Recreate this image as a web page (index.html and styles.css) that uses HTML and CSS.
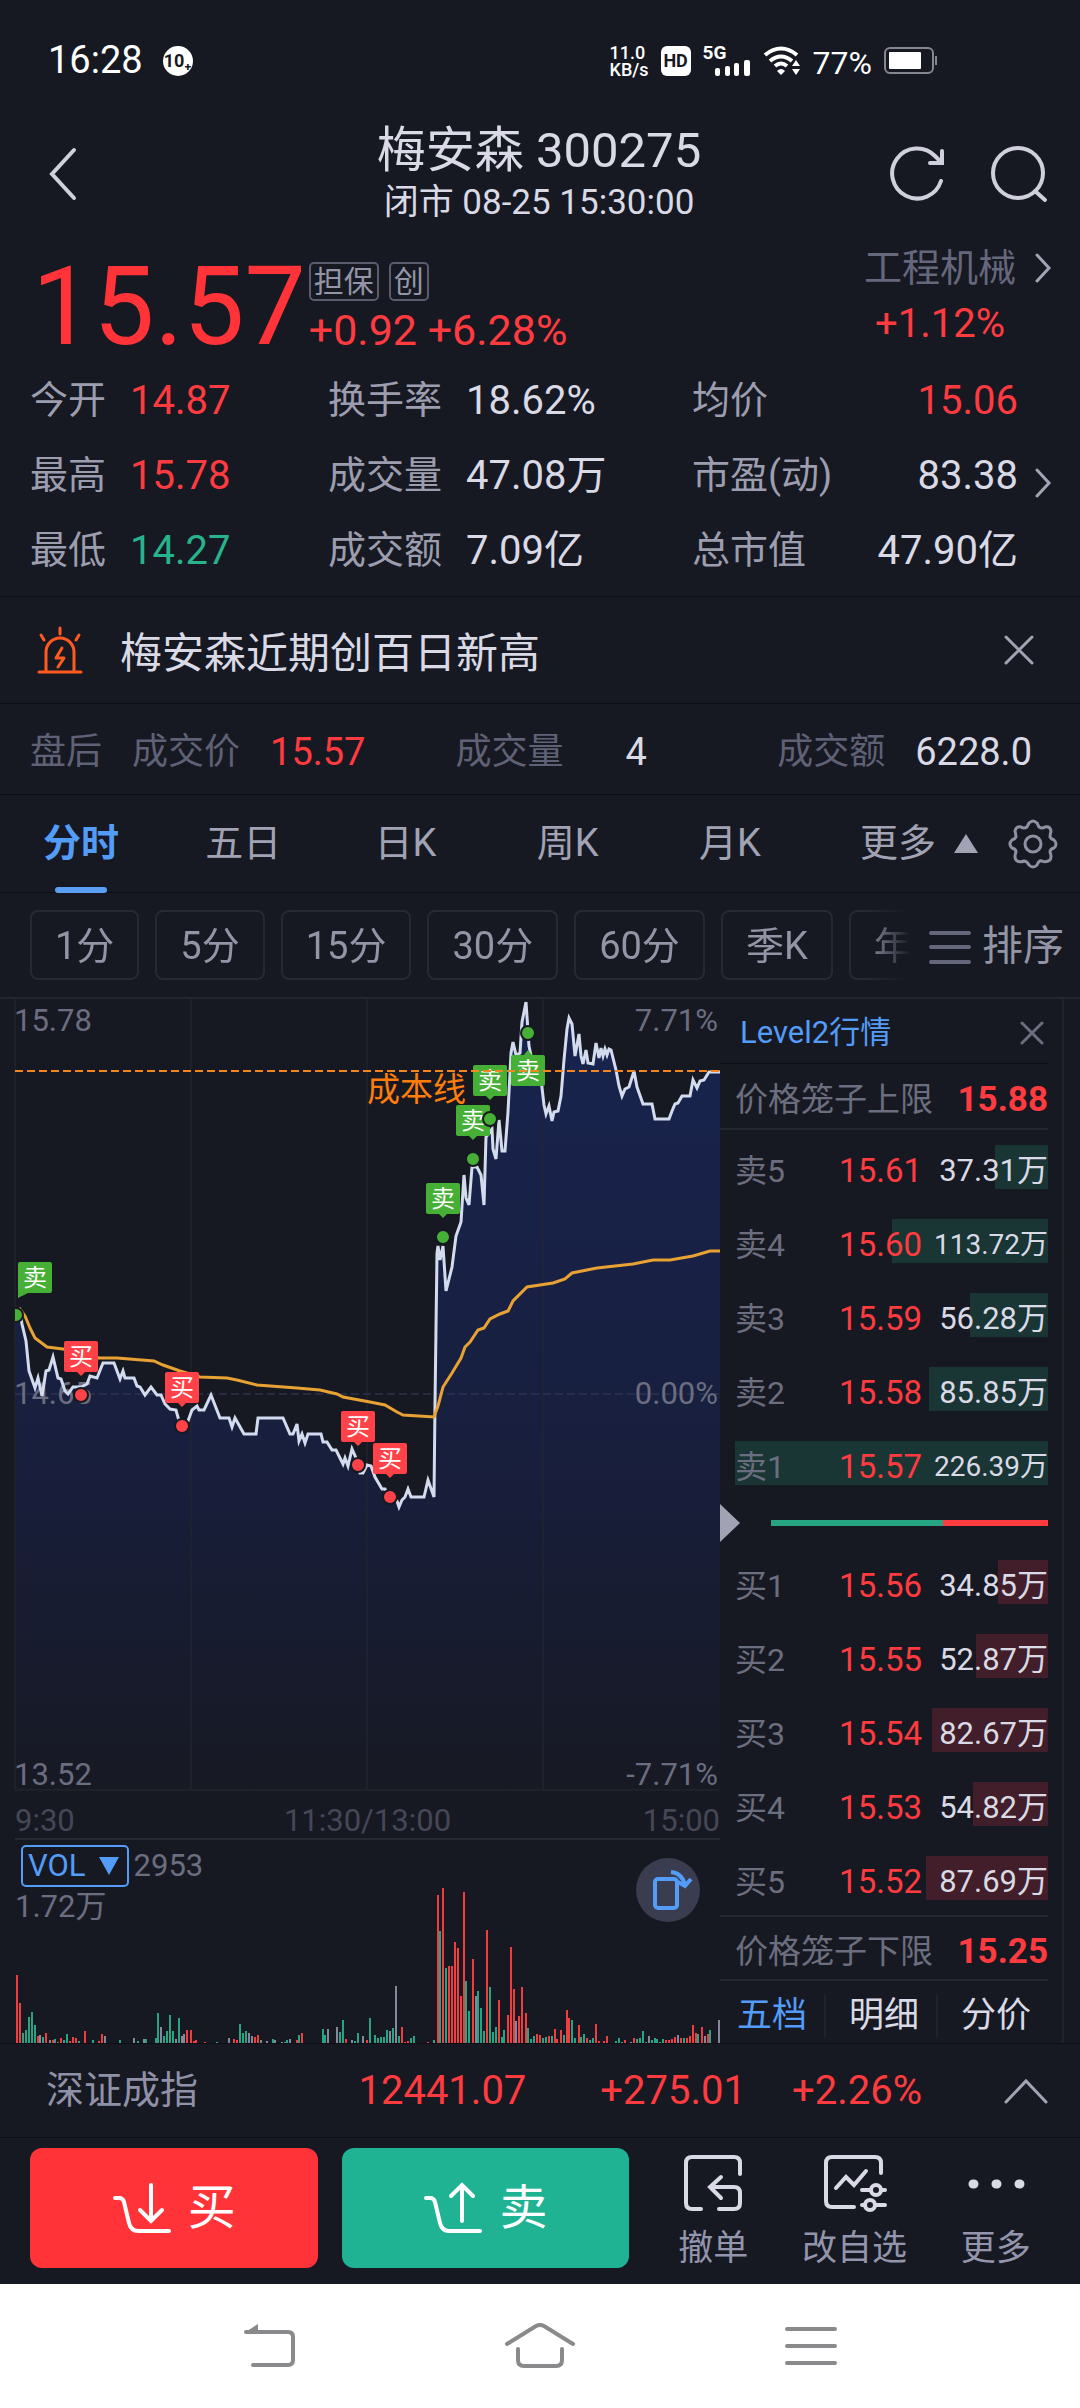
FILE: index.html
```html
<!DOCTYPE html>
<html lang="zh-CN">

<head>
    <meta charset="UTF-8">
    <meta name="viewport" content="width=device-width, initial-scale=1.0">
    <title>梅安森 300275</title>
    <link rel="stylesheet" href="styles.css">
</head>

<body>
    <div class="status-bar">
        <span class="clock">16:28</span>
        <span class="badge">10₊</span>
        <div class="status-right">
            <div class="net-speed"><span>11.0</span><span>KB/s</span></div>
            <span class="hd">HD</span>
            <div class="signal">
                <span>5G</span>
                <svg width="36" height="16" viewBox="0 0 36 16" fill="#fff">
                    <rect x="0" y="8" width="5" height="8" rx="2" />
                    <rect x="10" y="6" width="5" height="10" rx="2" />
                    <rect x="19" y="3" width="5" height="13" rx="2" />
                    <rect x="29" y="0" width="6" height="16" rx="2" />
                </svg>
            </div>
            <svg class="wifi" viewBox="0 0 38 30">
                <g fill="none" stroke="#fff" stroke-width="4">
                    <path d="M2 9Q18 -4 34 9" />
                    <path d="M7 15Q18 6 29 15" />
                    <path d="M12 20Q18 15 24 20" />
                </g>
                <path d="M14 25Q18 21 22 25L18 29z M29 20l4-6 4 6z M29 23l4 6 4-6z" fill="#fff" />
            </svg>
            <span class="percent">77%</span>
            <svg class="battery" viewBox="0 0 54 28">
                <rect x="1" y="1" width="48" height="25" rx="5" fill="none" stroke="#85868f" stroke-width="2" />
                <rect x="5" y="5" width="32" height="17" rx="1" fill="#fff" />
                <rect x="51" y="9" width="2" height="9" fill="#85868f" />
            </svg>
        </div>
    </div>

    <header class="top">
        <button class="icon-btn back" aria-label="返回">
            <svg width="30" height="54" viewBox="0 0 30 54"><path d="M26 3L4 27l22 24" /></svg>
        </button>
        <div class="title">
            <h1>梅安森 300275</h1>
            <p>闭市 08-25 15:30:00</p>
        </div>
        <div class="top-icons">
            <button class="icon-btn" aria-label="刷新">
                <svg width="58" height="58" viewBox="0 0 58 58"><path d="M53 36A25 25 0 1 1 47 11L53 17M54 6V18H42" /></svg>
            </button>
            <button class="icon-btn" aria-label="搜索">
                <svg width="58" height="58" viewBox="0 0 58 58"><circle cx="28" cy="28" r="25" /><path d="M45 46l10 9" /></svg>
            </button>
        </div>
    </header>

    <section class="quote">
        <div class="price">15.57</div>
        <div class="change">
            <div class="tags"><span>担保</span><span>创</span></div>
            <div class="red">+0.92 +6.28%</div>
        </div>
        <a class="sector" href="#">
            <span class="sector-name">工程机械</span>
            <svg width="18" height="30" viewBox="0 0 18 30"><path d="M3 2l12 13L3 28" /></svg>
            <span class="sector-change">+1.12%</span>
        </a>
    </section>

    <section class="stats">
        <dl>
            <div><dt>今开</dt><dd class="red">14.87</dd></div>
            <div><dt>换手率</dt><dd>18.62%</dd></div>
            <div class="end"><dt>均价</dt><dd class="red">15.06</dd></div>
            <div><dt>最高</dt><dd class="red">15.78</dd></div>
            <div><dt>成交量</dt><dd>47.08万</dd></div>
            <div class="end"><dt>市盈(动)</dt><dd>83.38</dd></div>
            <div><dt>最低</dt><dd class="green">14.27</dd></div>
            <div><dt>成交额</dt><dd>7.09亿</dd></div>
            <div class="end"><dt>总市值</dt><dd>47.90亿</dd></div>
        </dl>
        <button class="icon-btn more-stats" aria-label="展开指标">
            <svg width="18" height="30" viewBox="0 0 18 30"><path d="M3 2l12 13L3 28" /></svg>
        </button>
    </section>

    <section class="alert">
        <svg class="siren" width="46" height="48" viewBox="0 0 46 48" fill="none" stroke="#ff5a1f" stroke-width="3" stroke-linecap="round">
            <path d="M2 46h42M9 45V26a14 14 0 0 1 28 0V45M23 2v6M4 9l3 5M42 9l-3 5" />
            <path d="M25 22l-6 10h8l-6 9" stroke-linejoin="round" />
        </svg>
        <p>梅安森近期创百日新高</p>
        <button class="icon-btn" aria-label="关闭提示">
            <svg width="30" height="30" viewBox="0 0 30 30"><path d="M2 2l26 26M28 2L2 28" /></svg>
        </button>
    </section>

    <section class="after-hours">
        <span>盘后</span>
        <span>成交价</span><b class="red">15.57</b>
        <span class="vol-label">成交量</span><b>4</b>
        <span class="amount-label">成交额</span><b>6228.0</b>
    </section>

    <nav class="tabs">
        <button class="active">分时</button>
        <button>五日</button>
        <button>日K</button>
        <button>周K</button>
        <button>月K</button>
        <button class="more">更多<i></i></button>
        <button class="gear" aria-label="设置">
            <svg width="50" height="50" viewBox="0 0 50 50">
                <path d="M21 4Q25 0 29 4L31 8Q34 10 37 8Q42 7 43 12Q42 16 42 18Q43 20 46 21Q50 25 46 29Q42 30 42 33Q44 38 42 41Q38 44 34 42Q31 41 29 46Q25 50 21 46Q19 42 16 42Q11 44 8 41Q6 38 8 33Q8 30 4 29Q0 25 4 21Q7 20 8 18Q8 16 7 12Q8 7 13 8Q16 10 19 8Z" />
                <circle cx="25" cy="25" r="8" />
            </svg>
        </button>
    </nav>

    <div class="periods">
        <div class="chips">
            <button>1分</button>
            <button>5分</button>
            <button>15分</button>
            <button>30分</button>
            <button>60分</button>
            <button>季K</button>
            <button>年</button>
        </div>
        <button class="sort">
            <svg width="42" height="36" viewBox="0 0 42 36"><path d="M2 4h38M2 18h38M2 33h38" /></svg>
            排序
        </button>
    </div>

    <main>
        <div class="charts">
            <svg class="price-chart" viewBox="0 0 720 793">
                <defs>
                    <linearGradient id="area" x1="0" y1="0" x2="0" y2="1">
                        <stop offset="0" stop-color="#18244f" />
                        <stop offset="0.55" stop-color="#181f3e" />
                        <stop offset="1" stop-color="#171923" />
                    </linearGradient>
                    <clipPath id="plot"><rect x="15" y="0" width="705" height="793" /></clipPath>
                </defs>
                <polygon id="fill" fill="url(#area)" />
                <path class="grid" d="M15 0V791M191 0V791M367 0V791M543 0V791M15 791H720" />
                <path class="zero" d="M15 395H720" />
                <g class="scale">
                    <text x="14" y="32">15.78</text>
                    <text x="14" y="405">14.65</text>
                    <text x="14" y="786">13.52</text>
                    <text x="718" y="32" text-anchor="end">7.71%</text>
                    <text x="718" y="405" text-anchor="end">0.00%</text>
                    <text x="718" y="786" text-anchor="end">-7.71%</text>
                </g>
                <polyline id="line" class="line" />
                <polyline class="average" points="19,309 25,317 30,329 35,339 47,348 63,350 99,359 117,359 154,362 163,366 180,372 200,378 227,379 237,381 257,386 297,389 320,391 337,395 343,398 370,403 385,406 397,413 403,416 434,418 438,407 443,388 452,374 461,359 465,348 470,343 478,331 484,329 490,320 500,315 508,312 513,302 527,288 553,284 565,280 572,274 597,269 633,265 653,261 670,261 693,257 710,252 720,252" />
                <text x="367" y="102" class="cost-text">成本线</text>
                <g id="marks" clip-path="url(#plot)"></g>
                <path class="cost" d="M15 72H720" />
            </svg>
            <div class="times"><span>9:30</span><span>11:30/13:00</span><span>15:00</span></div>
            <div class="volume">
                <svg id="bars" viewBox="0 0 720 203"></svg>
                <div class="volume-head">
                    <div><button class="vol-btn">VOL <i></i></button><span>2953</span></div>
                    <span>1.72万</span>
                </div>
                <button class="rotate" aria-label="横屏">
                    <svg width="64" height="64" viewBox="0 0 64 64">
                        <rect x="19" y="21" width="22" height="29" rx="3" />
                        <path d="M35 14Q46 15 49 27M42 24l7 4 6-7" />
                    </svg>
                </button>
            </div>
        </div>

        <aside class="book">
            <div class="book-title">
                <a href="#">Level2行情</a>
                <button class="icon-btn" aria-label="关闭行情">
                    <svg width="24" height="24" viewBox="0 0 24 24"><path d="M2 2l20 20M22 2L2 22" /></svg>
                </button>
            </div>
            <div class="limit"><span>价格笼子上限</span><b>15.88</b></div>
            <table class="asks">
                <tr style="--size: 17%"><th>卖5</th><td>15.61</td><td>37.31万</td></tr>
                <tr style="--size: 50%"><th>卖4</th><td>15.60</td><td class="long">113.72万</td></tr>
                <tr style="--size: 25%"><th>卖3</th><td>15.59</td><td>56.28万</td></tr>
                <tr style="--size: 38%"><th>卖2</th><td>15.58</td><td>85.85万</td></tr>
                <tr style="--size: 100%"><th>卖1</th><td>15.57</td><td class="long">226.39万</td></tr>
            </table>
            <div class="ratio"><i class="arrow"></i><div class="ratio-bar"><i style="width: 62%"></i></div></div>
            <table class="bids">
                <tr style="--size: 16%"><th>买1</th><td>15.56</td><td>34.85万</td></tr>
                <tr style="--size: 23%"><th>买2</th><td>15.55</td><td>52.87万</td></tr>
                <tr style="--size: 37%"><th>买3</th><td>15.54</td><td>82.67万</td></tr>
                <tr style="--size: 24%"><th>买4</th><td>15.53</td><td>54.82万</td></tr>
                <tr style="--size: 39%"><th>买5</th><td>15.52</td><td>87.69万</td></tr>
            </table>
            <div class="limit lower"><span>价格笼子下限</span><b>15.25</b></div>
            <div class="book-tabs">
                <button class="active">五档</button>
                <button>明细</button>
                <button>分价</button>
            </div>
        </aside>
    </main>

    <div class="index-row">
        <span class="index-name">深证成指</span>
        <span>12441.07</span>
        <span>+275.01</span>
        <span>+2.26%</span>
        <button class="icon-btn" aria-label="展开指数">
            <svg width="44" height="26" viewBox="0 0 44 26"><path d="M2 24L22 3l20 21" /></svg>
        </button>
    </div>

    <footer class="actions">
        <button class="trade buy">
            <svg width="60" height="54" viewBox="0 0 60 54"><path d="M3 17h4q4 0 5 4l5 21q2 8 9 8h31M39 4v36M28 29l11 11 11-11" /></svg>
            买
        </button>
        <button class="trade sell">
            <svg width="60" height="54" viewBox="0 0 60 54"><path d="M3 17h4q4 0 5 4l5 21q2 8 9 8h31M39 40V4M28 15L39 4l11 11" /></svg>
            卖
        </button>
        <button class="tool">
            <svg width="62" height="60" viewBox="0 0 62 60"><path d="M58 20V9q0-6-6-6H10q-6 0-6 6v40q0 6 6 6h9M37 55h15q6 0 6-6V39q0-6-6-6H28M39 23L28 33l11 11" /></svg>
            撤单
        </button>
        <button class="tool">
            <svg width="66" height="60" viewBox="0 0 66 60"><path d="M59 19V9q0-6-6-6H10q-6 0-6 6v38q0 6 6 6h22M14 34l10-11 8 8 12-14M40 36h9M60 36h3M40 51h3M53 51h10" /><circle cx="54" cy="36" r="5" /><circle cx="48" cy="51" r="5" /></svg>
            改自选
        </button>
        <button class="tool">
            <svg width="62" height="60" viewBox="0 0 62 60"><path class="dots" d="M8 30h1M31 30h1M54 30h1" /></svg>
            更多
        </button>
    </footer>

    <div class="system-nav">
        <button aria-label="返回"><svg width="54" height="46" viewBox="0 0 54 46"><path d="M4 9h42q5 0 5 5v23q0 5-5 5H11" /><path class="head" d="M2 10L16 1v9z" /></svg></button>
        <button aria-label="主页"><svg width="72" height="46" viewBox="0 0 72 46"><path d="M3 21L32 3q4-2 8 0L69 21M14 26v11q0 6 6 6h32q6 0 6-6V26" /></svg></button>
        <button aria-label="最近任务"><svg width="54" height="46" viewBox="0 0 54 46"><path d="M3 6h48M3 23h48M3 40h48" /></svg></button>
    </div>

    <script>
        const prices = "19,309 22,325 26,342 29,372 35,389 38,379 42,397 46,372 49,371 53,358 58,379 61,380 65,392 68,395 73,388 81,388 87,385 90,377 97,379 103,364 114,364 120,380 123,372 125,379 134,379 137,387 140,388 145,396 151,388 157,396 161,396 165,405 170,410 176,411 179,422 182,425 188,422 192,411 197,407 199,411 204,411 211,396 220,419 229,419 232,428 235,419 244,435 256,435 258,419 283,419 290,435 293,435 297,425 299,442 302,435 305,444 308,435 321,435 323,443 327,443 332,451 336,451 343,465 345,459 348,467 352,450 356,459 358,465 360,474 363,474 367,466 371,467 375,478 382,490 385,490 390,498 397,502 399,508 402,501 405,498 408,490 411,498 424,498 428,481 434,498 435,405 437,254 438,247 440,261 443,247 446,292 452,268 456,237 461,223 464,176 466,199 469,206 472,168 477,168 481,176 484,206 486,138 492,130 493,150 496,160 499,121 502,152 505,152 508,113 511,54 513,43 516,56 520,54 522,23 526,3 529,47 532,61 541,80 544,106 546,115 549,107 552,122 554,113 558,112 561,97 564,61 567,30 569,19 572,25 575,57 579,35 581,57 583,65 586,51 588,64 593,65 596,44 599,59 601,49 603,57 605,50 607,56 609,50 611,51 616,71 619,87 622,97 625,90 629,88 634,72 637,88 643,105 652,105 655,120 669,120 672,112 675,105 678,104 682,97 690,97 693,81 697,89 700,82 704,81 709,73 720,73";

        // label left, label top, dot x, dot y, type
        const trades = [
            [18, 263, 16, 316, "sell"],
            [64, 342, 81, 396, "buy"],
            [165, 373, 182, 427, "buy"],
            [341, 412, 358, 466, "buy"],
            [373, 444, 390, 498, "buy"],
            [426, 184, 443, 238, "sell"],
            [456, 106, 473, 160, "sell"],
            [473, 66, 490, 120, "sell"],
            [511, 56, 528, 34, "sell"]
        ];

        // x, height, colour (r up, g down, w flat)
        const volumes = "17,68r 20,40r 23,10g 26,13g 29,26g 32,31g 35,18g 38,7r 40,8w 43,6g 46,10r 50,3w 53,3r 55,4g 58,1r 61,5r 64,3g 67,9g 70,2r 73,6r 76,5r 79,2g 85,12r 93,3g 99,2r 102,9r 105,7w 120,3g 134,5w 138,2g 144,4w 146,4g 156,5g 158,30g 161,16w 164,7g 167,12g 170,28g 173,12g 176,4w 179,25g 182,7w 184,9w 187,13r 191,13r 194,2r 196,3r 205,1r 217,1g 229,5w 234,4r 237,3r 240,19g 243,10g 246,12g 249,10w 252,7w 255,6r 258,8r 261,3w 267,2w 273,4g 275,3w 282,1w 285,1g 287,3g 290,4w 297,3r 299,8g 302,10r 323,14g 325,8g 328,14w 337,16w 340,11g 343,23g 346,4r 352,3w 355,2g 358,10g 363,7w 367,3r 370,25g 375,8g 378,5g 381,6g 384,6g 387,13g 390,12w 393,15g 396,57w 399,7g 402,16r 405,1r 408,2r 411,5g 414,7g 428,1r 434,3g 438,148r 440,112g 443,155r 446,75g 449,77r 452,77r 455,101r 458,95r 461,47r 464,151r 466,62g 469,32g 473,84r 476,47w 478,52g 481,35g 484,12g 487,113r 490,56g 493,11g 496,16g 499,43r 502,6g 504,13g 508,28r 511,96r 514,54r 516,22w 519,27r 522,56r 526,30r 528,15g 531,4g 534,7g 537,9r 540,8r 543,5g 546,6g 549,7r 552,7g 555,14r 557,4r 561,13r 564,8g 567,33r 569,25r 572,23g 575,5g 579,18r 581,6g 584,9g 587,5r 590,3g 593,5g 596,19r 599,2r 604,2r 607,7r 616,2g 619,5g 622,1g 625,3r 631,1w 634,5r 637,4g 640,5g 643,12g 646,1g 649,7w 652,3g 655,5g 657,4g 660,1g 663,4g 666,3r 669,3r 672,4r 675,6r 678,8w 681,5r 684,5g 687,5r 690,7r 693,18r 696,10r 698,9g 702,16r 705,7w 708,9r 710,13g 719,23w";

        document.getElementById("line").setAttribute("points", prices);
        document.getElementById("fill").setAttribute("points", "15,309 " + prices + " 720,791 15,791");

        let marks = "";
        for (const [x, y, dx, dy, type] of trades) {
            // first label points at the edge, the last one hangs below its dot
            let tail = `M${x + 12} ${y + 30}l5 5 5-5z`;
            if (x === 18) tail = `M${x} ${y + 28}v8l10-5z`;
            if (dy < y) tail = `M${x + 12} ${y + 1}l5-6 5 6z`;
            marks += `<g class="${type}-mark"><circle cx="${dx}" cy="${dy}" r="7" />
                <rect x="${x}" y="${y}" width="34" height="31" rx="2" /><path d="${tail}" />
                <text x="${x + 17}" y="${y + 24}">${type === "buy" ? "买" : "卖"}</text></g>`;
        }
        document.getElementById("marks").innerHTML = marks;

        const colors = { r: "#f23d40", g: "#27a583", w: "#85889a" };
        document.getElementById("bars").innerHTML = volumes.split(" ").map(item => {
            const [x, rest] = item.split(",");
            const h = parseInt(rest);
            return `<rect x="${x - 1}" y="${203 - h}" width="2" height="${h}" fill="${colors[rest.slice(-1)]}" />`;
        }).join("");
    </script>
</body>

</html>
```
FILE: styles.css
```css
* {
    box-sizing: border-box;
}

body {
    margin: 0;
    min-height: 100vh;
    display: flex;
    flex-direction: column;
    background-color: #171922;
    color: #d9dae6;
    font-family: Roboto, "Noto Sans CJK SC", sans-serif;
    font-size: 38px;
    line-height: 1.2;
}

h1, p, dl, dd {
    margin: 0;
}

button {
    background: none;
    border: none;
    padding: 0;
    color: inherit;
    font: inherit;
}

a {
    color: inherit;
    text-decoration: none;
}

svg {
    display: block;
    flex-shrink: 0;
}

i {
    display: block;
}

.red {
    color: #ff3b40;
}

.green {
    color: #27b38c;
}

.icon-btn svg,
.sector svg {
    fill: none;
    stroke: #a3a4b3;
    stroke-width: 3;
    stroke-linecap: round;
}

/* Status bar */
.status-bar {
    height: 122px;
    padding: 0 142px 0 48px;
    display: flex;
    align-items: center;
    gap: 20px;
    color: #fff;
}

.clock {
    font-size: 38px;
}

.badge {
    width: 30px;
    height: 30px;
    border-radius: 50%;
    background-color: #fff;
    color: #171922;
    font-size: 18px;
    font-weight: 700;
    line-height: 30px;
    text-align: center;
}

.status-right {
    margin-left: auto;
    display: flex;
    align-items: center;
    gap: 12px;
}

.net-speed {
    display: flex;
    flex-direction: column;
    font-size: 18px;
    font-weight: 500;
    line-height: 17px;
}

.hd {
    width: 30px;
    height: 30px;
    border-radius: 6px;
    background-color: #fff;
    color: #171922;
    font-size: 18px;
    font-weight: 700;
    line-height: 30px;
    text-align: center;
}

.signal {
    display: flex;
    flex-direction: column;
    width: 48px;
    padding-bottom: 4px;
    font-size: 19px;
    font-weight: 700;
    line-height: 22px;
}

.signal svg {
    align-self: flex-end;
    margin-top: -4px;
}

.wifi {
    width: 38px;
    height: 30px;
}

.percent {
    font-size: 32px;
    padding-top: 4px;
}

.battery {
    width: 54px;
    height: 28px;
}

/* Title */
.top {
    height: 118px;
    padding: 0 32px 16px 30px;
    display: grid;
    grid-template-columns: 1fr auto 1fr;
    align-items: center;
}

.top .icon-btn svg {
    stroke: #cfd0dc;
    stroke-width: 4;
}

.back {
    justify-self: start;
    margin-left: 18px;
}

.title {
    text-align: center;
}

h1 {
    font-size: 49px;
    font-weight: 400;
    line-height: 58px;
}

.title p {
    font-size: 35px;
    line-height: 46px;
}

.top-icons {
    display: flex;
    justify-content: flex-end;
    gap: 44px;
}

/* Quote */
.quote {
    height: 122px;
    padding: 8px 28px 0 32px;
    display: flex;
}

.price {
    color: #ff3338;
    font-size: 109px;
    line-height: 118px;
}

.change {
    margin-left: 3px;
    font-size: 43px;
    line-height: 50px;
    padding-top: 14px;
}

.tags {
    display: flex;
    gap: 10px;
    margin-bottom: 4px;
}

.tags span {
    border: 2px solid #5b5d6f;
    border-radius: 5px;
    padding: 0 3px;
    color: #9395a6;
    font-size: 30px;
    line-height: 35px;
}

.sector {
    margin-left: auto;
    display: grid;
    grid-template-columns: auto auto;
    column-gap: 18px;
    align-items: center;
    align-content: start;
}

.sector-name {
    color: #65677c;
    font-size: 38px;
    line-height: 40px;
}

.sector-change {
    color: #ff3b40;
    font-size: 40px;
    line-height: 72px;
    text-align: center;
}

.stats {
    display: flex;
    align-items: center;
    padding: 0 28px 0 30px;
    height: 235px;
    border-bottom: 1px solid #0d0e15;
}

.stats dl {
    flex: 1;
    display: grid;
    grid-template-columns: 298fr 364fr 326fr;
    margin-bottom: 6px;
}

.stats dl div {
    display: flex;
    align-items: center;
    gap: 24px;
    height: 75px;
}

.stats .end {
    justify-content: space-between;
}

.stats dt {
    color: #9c9eb0;
}

.stats dd {
    font-size: 40px;
}

.more-stats {
    margin-left: 16px;
    padding-top: 8px;
}

/* Alert */
.alert {
    height: 107px;
    padding: 0 46px 0 37px;
    display: flex;
    align-items: center;
    border-bottom: 1px solid #0d0e15;
}

.alert p {
    flex: 1;
    padding: 8px 0 0 37px;
    font-size: 42px;
}

.after-hours {
    height: 91px;
    padding: 8px 48px 0 30px;
    display: flex;
    align-items: center;
    gap: 30px;
    color: #5f6176;
    font-size: 36px;
    border-bottom: 1px solid #0d0e15;
}

.after-hours b {
    color: #d9dae6;
    font-size: 38px;
    font-weight: 400;
}

.after-hours .red {
    color: #ff3b40;
}

.vol-label {
    margin-left: 60px;
    padding-right: 32px;
}

.amount-label {
    margin-left: auto;
}

/* Tabs */
.tabs {
    height: 98px;
    display: flex;
    align-items: center;
    padding-right: 22px;
    color: #a1a3b5;
    border-bottom: 1px solid #0d0e15;
}

.tabs button {
    flex: 1;
    height: 98px;
}

.tabs .active {
    position: relative;
    color: #539cf8;
    font-weight: 700;
}

.tabs .active::after {
    content: "";
    position: absolute;
    left: calc(50% - 26px);
    bottom: 0;
    width: 52px;
    height: 6px;
    border-radius: 3px;
    background-color: #5b9ff5;
}

.tabs .more {
    flex: 0 0 142px;
    margin-left: 37px;
    display: flex;
    align-items: center;
    justify-content: center;
    gap: 18px;
}

.more i {
    border: 12px solid transparent;
    border-top: none;
    border-bottom: 19px solid #a1a3b5;
}

.tabs .gear {
    flex: 0 0 50px;
    margin-left: 18px;
}

.gear svg {
    margin: 0 auto;
    fill: none;
    stroke: #8f91a3;
    stroke-width: 3;
}

.periods {
    height: 106px;
    padding: 0 16px 0 30px;
    display: flex;
    align-items: center;
    border-bottom: 2px solid #23252f;
    color: #9395a6;
}

.chips {
    flex: 1;
    min-width: 0;
    overflow: hidden;
    display: flex;
    gap: 16px;
    -webkit-mask-image: linear-gradient(to right, #000 94%, transparent 99%);
    mask-image: linear-gradient(to right, #000 94%, transparent 99%);
}

.chips button {
    flex-shrink: 0;
    height: 70px;
    padding: 4px 23px 0;
    border: 2px solid #262833;
    border-radius: 8px;
}

.sort {
    display: flex;
    align-items: center;
    gap: 11px;
    margin-left: 10px;
    padding-top: 4px;
    font-size: 41px;
}

.sort svg {
    stroke: #65677c;
    stroke-width: 4;
    stroke-linecap: round;
}

/* Charts */
main {
    display: grid;
    grid-template-columns: 2fr 1fr;
}

.charts {
    min-width: 0;
}

.price-chart {
    width: 100%;
}

.grid {
    fill: none;
    stroke: #23252f;
    stroke-width: 2;
    opacity: 0.6;
}

.zero {
    stroke: #2f3350;
    stroke-width: 2;
    stroke-dasharray: 8 4;
    opacity: 0.7;
}

.scale {
    fill: #6b6d80;
    font-size: 31px;
}

.line {
    fill: none;
    stroke: #d3dbef;
    stroke-width: 3;
}

.average {
    fill: none;
    stroke: #e8a234;
    stroke-width: 3;
}

.cost {
    stroke: #f5861f;
    stroke-width: 2;
    stroke-dasharray: 8 4;
}

.cost-text {
    fill: #ff7d0a;
    font-size: 33px;
}

.sell-mark {
    fill: #45b035;
}

.buy-mark {
    fill: #ff4248;
}

.sell-mark circle,
.buy-mark circle {
    stroke: #171922;
    stroke-width: 2;
}

.sell-mark text,
.buy-mark text {
    fill: #fff;
    font-size: 24px;
    text-anchor: middle;
}

.times {
    display: grid;
    grid-template-columns: 1fr auto 1fr;
    margin-left: 15px;
    height: 48px;
    color: #454757;
    font-size: 31px;
    line-height: 58px;
    border-bottom: 2px solid #262833;
}

.times span:last-child {
    text-align: right;
}

.volume {
    display: grid;
    grid-template-columns: 1fr auto;
}

.volume > * {
    grid-row: 1;
}

#bars {
    grid-column: 1 / 3;
    width: 100%;
}

.volume-head {
    grid-column: 1;
    padding: 5px 0 0 15px;
    color: #6b6d80;
    font-size: 31px;
    line-height: 40px;
}

.volume-head div {
    display: flex;
    align-items: center;
    gap: 5px;
    padding-left: 6px;
}

.vol-btn {
    display: flex;
    align-items: center;
    gap: 13px;
    height: 42px;
    padding: 0 8px 0 5px;
    border: 2px solid #539cf8;
    border-radius: 5px;
    color: #539cf8;
}

.vol-btn i {
    border: 10px solid transparent;
    border-bottom: none;
    border-top: 18px solid #539cf8;
}

.rotate {
    grid-column: 2;
    align-self: start;
    margin: 18px 20px 0 0;
    border-radius: 50%;
    background-color: #3a3d50;
}

.rotate svg {
    fill: none;
    stroke: #539cf8;
    stroke-width: 4;
}

/* Order book */
.book {
    min-width: 0;
    margin-right: 16px;
    padding-right: 14px;
    border-right: 2px solid #20222c;
    display: flex;
    flex-direction: column;
}

.book-title {
    height: 65px;
    padding: 4px 4px 0 20px;
    display: flex;
    align-items: center;
    justify-content: space-between;
    color: #539cf8;
    font-size: 31px;
    border-bottom: 1px solid #0d0e15;
}

.book-title .icon-btn svg {
    stroke: #6b6d80;
}

.limit {
    height: 66px;
    padding: 8px 0 0 15px;
    display: flex;
    align-items: center;
    justify-content: space-between;
    color: #6b6e7e;
    font-size: 33px;
    border-bottom: 2px solid #23252f;
}

.limit b {
    color: #ff3b40;
    font-size: 35px;
}

.book table {
    margin-left: 15px;
    border-collapse: collapse;
    font-size: 33px;
}

.book tr {
    height: 74px;
    background-repeat: no-repeat;
    background-position: right center;
    background-size: var(--size) 44px;
}

.asks tr {
    background-image: linear-gradient(#193534, #193534);
}

.bids tr {
    background-image: linear-gradient(#411e29, #411e29);
}

.book th {
    padding: 8px 0 0;
    color: #6b6e7e;
    font-size: 32px;
    font-weight: 400;
    text-align: left;
}

.book td {
    padding: 8px 0 0;
    color: #ff3b40;
    text-align: right;
}

.book td:last-child {
    width: 126px;
    color: #d9dae6;
    font-size: 31px;
}

.book td.long {
    font-size: 28px;
}

.ratio {
    height: 45px;
    display: flex;
    align-items: center;
    justify-content: space-between;
}

.arrow {
    border: 19px solid transparent;
    border-right: none;
    border-left: 20px solid #a1a3b5;
}

.ratio-bar {
    flex: 1;
    margin-left: 31px;
    height: 6px;
    background-color: #ff3b40;
}

.ratio-bar i {
    height: 6px;
    background-color: #27a583;
}

.lower {
    border-top: 2px solid #23252f;
}

.book-tabs {
    flex: 1;
    display: flex;
    align-items: center;
    justify-content: space-between;
    padding: 8px 0 0;
    font-size: 35px;
}

.book-tabs button {
    flex: 1;
    padding-left: 6px;
    border-left: 2px solid #20222c;
}

.book-tabs .active {
    padding: 0;
    border: none;
    color: #539cf8;
}

/* Index */
.index-row {
    height: 95px;
    padding: 0 32px 0 46px;
    display: flex;
    align-items: center;
    color: #ff3b40;
    font-size: 40px;
    border-top: 1px solid #0d0e15;
    border-bottom: 1px solid #0d0e15;
}

.index-name {
    flex: 1;
    color: #8f91a8;
    font-size: 38px;
}

.index-row span + span {
    margin-right: 74px;
}

.index-row span + span + span {
    margin-right: 46px;
}

.index-row span:nth-child(4) {
    margin-right: 82px;
}

/* Bottom actions */
.actions {
    padding: 10px 24px 14px 30px;
    display: grid;
    grid-template-columns: 287fr 287fr 120fr 114fr 120fr;
    column-gap: 24px;
}

.trade {
    height: 120px;
    border-radius: 12px;
    display: flex;
    align-items: center;
    justify-content: center;
    gap: 16px;
    color: #fff;
    font-size: 48px;
}

.trade svg {
    fill: none;
    stroke: #fff;
    stroke-width: 4;
    stroke-linecap: round;
}

.buy {
    background-color: #ff3338;
}

.sell {
    background-color: #1fb394;
}

.tool {
    display: flex;
    flex-direction: column;
    align-items: center;
    gap: 14px;
    padding-top: 6px;
    color: #9395ad;
    font-size: 35px;
    line-height: 42px;
    white-space: nowrap;
}

.tool svg {
    fill: none;
    stroke: #d9dae6;
    stroke-width: 4;
    stroke-linecap: round;
}

.tool .dots {
    stroke-width: 9;
}

.system-nav {
    flex: 1;
    min-height: 122px;
    padding: 0 134px;
    display: flex;
    align-items: center;
    background-color: #fff;
}

.system-nav button {
    flex: 1;
}

.system-nav svg {
    margin: 0 auto;
    fill: none;
    stroke: #8a8a8c;
    stroke-width: 4;
    stroke-linecap: round;
}

.system-nav .head {
    fill: #8a8a8c;
    stroke: none;
}
```
